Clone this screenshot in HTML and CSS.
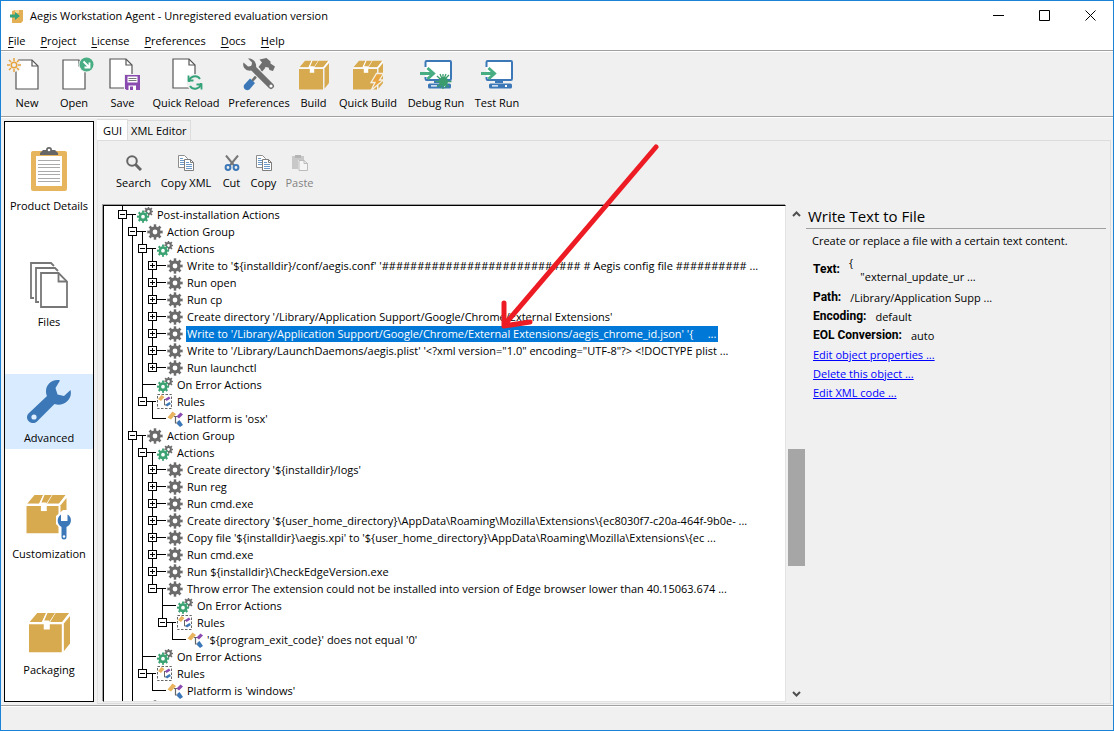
FILE: index.html
```html
<!DOCTYPE html>
<html lang="en">
<head>
<meta charset="utf-8">
<title>Aegis Workstation Agent</title>
<link rel="stylesheet" href="styles.css">
</head>
<body>
<svg class="sprite" width="0" height="0" aria-hidden="true">
  <symbol id="gear" viewBox="0 0 16 16">
    <circle cx="8" cy="8" r="4.1" fill="none" stroke="#6b6b6b" stroke-width="3.4"/>
    <circle cx="8" cy="8" r="6.4" fill="none" stroke="#6b6b6b" stroke-width="2.6" pathLength="32" stroke-dasharray="2 2" stroke-dashoffset="1"/>
  </symbol>
  <symbol id="gears" viewBox="0 0 16 16">
    <circle cx="11.5" cy="4.5" r="2.4" fill="none" stroke="#6b6b6b" stroke-width="2"/>
    <circle cx="11.5" cy="4.5" r="3.9" fill="none" stroke="#6b6b6b" stroke-width="1.9" pathLength="32" stroke-dasharray="2 2" stroke-dashoffset="1"/>
    <circle cx="6" cy="9.7" r="5.4" fill="#fff"/>
    <circle cx="6" cy="9.7" r="3.2" fill="none" stroke="#3ba272" stroke-width="2.7"/>
    <circle cx="6" cy="9.7" r="5" fill="none" stroke="#3ba272" stroke-width="2.2" pathLength="32" stroke-dasharray="2 2" stroke-dashoffset="1"/>
  </symbol>
  <symbol id="rule" viewBox="0 0 16 16">
    <path d="M7 5.500h3.500M8.500 5.500v6.500h3" fill="none" stroke="#666" stroke-width="1.200"/>
    <path d="M0.500 6.500l5-6 3.500 2.500-5 5.500z" fill="#e9b45f"/>
    <path d="M9.500 5.500l4-4 2.500 2-4 4z" fill="#8a4bb0"/>
    <path d="M10.500 10.500l2-1.500 3.500 5-3 2-3-3z" fill="#3c78b8"/>
  </symbol>
  <symbol id="rules" viewBox="0 0 16 16">
    <rect x="0.500" y="0.500" width="14" height="14" fill="none" stroke="#666" stroke-dasharray="2.500 1.500"/>
    <path d="M7 5.500h3M7.500 5.500v5.500h3" fill="none" stroke="#666"/>
    <path d="M1 5l3.500-4 3 2-3.500 4z" fill="#e9b45f"/>
    <path d="M8 5l4-2.500 1.500 2-4 2.500z" fill="#8a4bb0"/>
    <path d="M8.500 10.500l4-2.500 1.500 2-4 2.500z" fill="#3c78b8"/>
  </symbol>
  <symbol id="package" viewBox="0 0 30 30">
    <path d="M0 9h24v20.500H0z" fill="#d8aa50"/>
    <path d="M25.500 8.500L30 3v20l-4.500 5.800z" fill="#d8aa50"/>
    <path d="M6 0.700h6.500L9.500 7.300H0.500z" fill="#d8aa50"/>
    <path d="M15.500 0.700h5L17 7.300h-5z" fill="#fff"/>
    <path d="M12.500 0.700h4L12.500 7.300h-3z" fill="#fff"/>
    <path d="M19.500 0.700h9.800l-5 6.600H15.500z" fill="#d8aa50"/>
    <path d="M13.500 0.700h5.500L14.800 7.300v-1h-3.600z" fill="#d8aa50"/>
    <path d="M10.800 7.300h4.400v5.500h-4.400z" fill="#fff"/>
    <path d="M0 8h10.800M15.200 8h9.300L30 1.300" fill="none" stroke="#fff" stroke-width="1.200"/>
  </symbol>
  <symbol id="wrench" viewBox="0 0 44 44">
    <path d="M33 0.500c-6-2-14 3-14 10.500 0 2.200.3 3.500 1 5L1.500 33.500c-2 2-2 5.200 0 7.500 2.300 2.500 6 2.700 8.500.5L27.500 24c9 3 18.500-4.500 16-14l-6.500 6-6.500-1.500L28.500 8z" fill="currentColor"/>
    <circle cx="7" cy="37" r="2.600" fill="#dceeff"/>
  </symbol>
  <symbol id="page" viewBox="0 0 24 31">
    <path d="M1 1h16l6 6v23H1z" fill="#fff" stroke="#555" stroke-width="1.200"/>
    <path d="M17 1v6h6" fill="none" stroke="#555" stroke-width="1.200"/>
  </symbol>
  <symbol id="copy" viewBox="0 0 16 16">
    <path d="M0.500 0.500h6l3 3v9h-9z" fill="#fff" stroke="#8d8d8d"/>
    <path d="M2 3.500h3M2 5.500h4M2 7.500h4M2 9.500h4" stroke="#6a98c8"/>
    <path d="M6.500 4.500h6l3 3v8h-9z" fill="#fff" stroke="#7d7d7d"/>
    <path d="M12.500 4.500v3h3" fill="none" stroke="#7d7d7d"/>
    <path d="M8 7.500h3M8 9.500h6M8 11.500h6M8 13.500h6" stroke="#6a98c8"/>
  </symbol>
  <symbol id="monitor" viewBox="0 0 34 31">
    <path d="M6.500 8V3.200Q6.500 2 7.700 2H31Q32 2 32 3.200V19.500Q32 21 31 21H7.700Q6.500 21 6.500 19.500V18" fill="#fff" stroke="#3c78b8" stroke-width="2"/>
    <path d="M15 22h8v2h-8z" fill="#3c78b8"/>
    <rect x="9" y="24.500" width="23" height="5" rx="1.500" fill="#3c78b8"/>
    <path d="M12 26.200h6v1.400h-6zM25 26h2v2h-2z" fill="#fff"/>
    <path d="M1 14.500h12M8.500 9l6 5.500-6 5.500" fill="none" stroke="#48ad82" stroke-width="3"/>
  </symbol>
</svg>

<div class="window">
  <header class="titlebar">
    <svg class="app-icon" viewBox="0 0 14 14"><path d="M2 2l3-1h8v11l-2 2H2z" fill="#e4b055"/><path d="M5 1h4v3H5z" fill="#f6d99b"/><path d="M0 5.500h5V3l5 4-5 4V8.500H0z" fill="#35a37a"/></svg>
    <span class="title">Aegis Workstation Agent - Unregistered evaluation version</span>
    <div class="window-controls">
      <button aria-label="Minimize"><svg viewBox="0 0 11 11"><path d="M0 5.500h11"/></svg></button>
      <button aria-label="Maximize"><svg viewBox="0 0 11 11"><path d="M0.500 0.500h10v10h-10z"/></svg></button>
      <button aria-label="Close"><svg viewBox="0 0 11 11"><path d="M0.500 0.500l10 10M10.500 0.500l-10 10"/></svg></button>
    </div>
  </header>

  <nav class="menubar">
    <button><u>F</u>ile</button>
    <button><u>P</u>roject</button>
    <button><u>L</u>icense</button>
    <button><u>P</u>references</button>
    <button><u>D</u>ocs</button>
    <button><u>H</u>elp</button>
  </nav>

  <div class="toolbar">
    <button>
      <svg viewBox="0 0 38 34" width="38" height="34"><use href="#page" x="7" y="2" width="24" height="31"/><circle cx="6" cy="8" r="7" fill="#f0f0f0"/><g stroke="#e6a23c" stroke-width="1.500" fill="none"><circle cx="6" cy="8" r="2.800"/><path d="M6 1v3M6 12v3M-1 8h3M10 8h3M1 3l2 2M11 3l-2 2M1 13l2-2M11 13l-2-2"/></g></svg>
      New</button>
    <button>
      <svg viewBox="0 0 38 34" width="38" height="34"><use href="#page" x="7" y="2" width="24" height="31"/><circle cx="31.500" cy="7.500" r="8" fill="#f0f0f0"/><circle cx="31.500" cy="7.500" r="7" fill="#48ad82"/><path d="M28.500 4.500l5 5M34.500 5.500v5h-5" fill="none" stroke="#fff" stroke-width="1.800"/></svg>
      Open</button>
    <button>
      <svg viewBox="0 0 38 34" width="38" height="34"><use href="#page" x="5" y="1" width="24" height="31"/><path d="M20 17h17v17H20z" fill="#f0f0f0"/><path d="M21 18h15v15H22.500L21 31.500z" fill="#8a4bb0"/><path d="M23.500 19.500h10v6h-10zM24.500 28.500h7.500V33h-7.500z" fill="#fff"/><path d="M24.500 21.500h8M24.500 23.500h8" stroke="#777"/><path d="M26 29.500h3V33h-3z" fill="#8a4bb0"/></svg>
      Save</button>
    <button>
      <svg viewBox="0 0 38 34" width="38" height="34"><use href="#page" x="5" y="1" width="24" height="31"/><circle cx="28" cy="25.500" r="8.500" fill="#f0f0f0"/><g fill="none" stroke="#35a37a" stroke-width="2"><path d="M22 25a6 6 0 0 1 11-3M34 26a6 6 0 0 1-11 3"/><path d="M21.500 18.500v5h5M34.500 32.500v-5h-5" stroke-width="1.800"/></g></svg>
      Quick Reload</button>
    <button>
      <svg viewBox="0 0 34 34" width="34" height="34"><path d="M10 24L22.500 10" stroke="#6f6f6f" stroke-width="2.600"/><path d="M2 28l6-6.500 5 4.500-5.500 6.500q-3 1.500-5-.5-1.500-2-.5-4z" fill="#3c78b8"/><path d="M17.500 2.500L24.500 1l4 3.500v2l4.500 3-2 4.500-3.500-1-1-2.500-3.500-.5-3 3.500-3.500-3.500 3.500-4.500z" fill="#6f6f6f"/><path d="M11 11L29 29" stroke="#f0f0f0" stroke-width="8"/><path d="M11 11L29 29" stroke="#6f6f6f" stroke-width="6" stroke-linecap="round"/><path d="M6 1.500l4 4-.5 3.500-3.500.5L1.500 5.500C0 10 4 14.500 9.500 13.500L14 10.500c1-5-3-9.500-8-9z" fill="#6f6f6f"/><circle cx="29" cy="29" r="1.600" fill="#fff"/></svg>
      Preferences</button>
    <button><svg viewBox="0 0 34 34" width="34" height="34"><use href="#package" x="2" y="3" width="30" height="30"/></svg>
      Build</button>
    <button><svg viewBox="0 0 34 34" width="34" height="34"><use href="#package" x="2" y="3" width="30" height="30"/><path d="M25.500 16.500h7l-4 6.500h4L20 33.500l4-8h-4z" fill="#e9a53f" stroke="#f4f0e6" stroke-width="1.300"/></svg>
      Quick Build</button>
    <button><svg viewBox="0 0 34 34" width="34" height="34"><use href="#monitor" x="0" y="2" width="34" height="31"/><g stroke="#3a9c6c" stroke-width="1.300"><path d="M24 17v15M16.500 24.500h16M18 19l12 11M30 18L18 30M21 17l6 14M27 17l-6 14"/><circle cx="24.500" cy="24.500" r="4.500" fill="#3a9c6c" stroke="none"/></g></svg>
      Debug Run</button>
    <button><svg viewBox="0 0 34 34" width="34" height="34"><use href="#monitor" x="0" y="2" width="34" height="31"/></svg>
      Test Run</button>
  </div>

  <main class="workspace">
    <nav class="sections">
      <button><svg viewBox="0 0 38 46" width="38" height="46"><rect x="1" y="5" width="36" height="40" rx="2" fill="#e8b55f"/><path d="M6 10h26v30H6z" fill="#fff"/><path d="M10 7l3-3h3a3 3 0 0 1 6 0h3l3 3v2H10z" fill="#666"/><circle cx="19" cy="4" r="1.300" fill="#fff"/><path d="M8 14.500h22M8 18.500h22M8 21.500h22M8 25.500h22M8 28.500h22M8 32.500h22M8 35.500h22" stroke="#aaa"/></svg>Product Details</button>
      <button><svg viewBox="0 0 38 46" width="38" height="46"><g fill="none" stroke="#777" stroke-width="1.800"><path d="M4 36H1V1h20l3 3M9 40H6V6h19l3 3"/><path d="M11 11h17.500l8.500 8.500V45H11z" fill="#fff"/><path d="M28.500 11v8.500H37"/></g></svg>Files</button>
      <button class="current" aria-current="page"><svg class="blue" viewBox="0 0 44 44" width="44" height="44"><use href="#wrench" width="44" height="44"/></svg>Advanced</button>
      <button><svg viewBox="0 0 46 46" width="46" height="46"><use href="#package" x="0" y="0" width="41" height="40"/><path d="M37 16l-7 6v8l4 4v12h8V34l4-4v-8l-3-6z" fill="#fff"/><path d="M35 20.500c-4.500 3-4.500 10 .5 12.500V43q0 2.500 2.500 2.500T40.500 43V33c5.500-2.500 6-10 1-12.500v6.500H35z" fill="#3c78b8"/><circle cx="38" cy="42.500" r="1.200" fill="#fff"/></svg>Customization</button>
      <button><svg viewBox="0 0 42 44" width="42" height="44"><use href="#package" x="1" y="0" width="41" height="41"/></svg>Packaging</button>
    </nav>

    <section class="notebook">
      <div class="tabs" role="tablist">
        <button class="tab active" role="tab" aria-selected="true">GUI</button>
        <button class="tab" role="tab" aria-selected="false">XML Editor</button>
      </div>
      <div class="tab-page">
        <div class="edit-bar">
          <button><svg viewBox="0 0 16 16"><circle cx="6" cy="6" r="4.800" fill="none" stroke="#666" stroke-width="2"/><path d="M9.500 9.500l5.500 5.500" stroke="#666" stroke-width="3"/></svg>Search</button>
          <button><svg viewBox="0 0 16 16"><use href="#copy" width="16" height="16"/></svg>Copy XML</button>
          <button><svg viewBox="0 0 16 16"><path d="M2 0.500l8.500 10.500M14 0.500L5.500 11" stroke="#777" stroke-width="2"/><g fill="none" stroke="#3c78b8" stroke-width="2"><circle cx="4" cy="12.500" r="2.400"/><circle cx="12" cy="12.500" r="2.400"/></g></svg>Cut</button>
          <button><svg viewBox="0 0 16 16"><use href="#copy" width="16" height="16"/></svg>Copy</button>
          <button class="muted" disabled><svg viewBox="0 0 16 16"><path d="M0 1h12v4H6v9H0z" fill="#c8c8c8"/><path d="M3 0h6v3H3z" fill="#b4b4b4"/><path d="M7 5.500h5l3.500 3v7H7z" fill="#f5f5f5" stroke="#bbb"/><path d="M12 5.500v3h3.500" fill="none" stroke="#bbb"/></svg>Paste</button>
        </div>

        <div class="split">
          <div class="tree" role="tree">
            <ul>
              <li><div class="row open"><button class="toggle" aria-label="Collapse"></button><svg><use href="#gears"/></svg><span>Post-installation Actions</span></div>
                <ul>
                  <li><div class="row open"><button class="toggle" aria-label="Collapse"></button><svg><use href="#gear"/></svg><span>Action Group</span></div>
                    <ul>
                      <li><div class="row open"><button class="toggle" aria-label="Collapse"></button><svg><use href="#gears"/></svg><span>Actions</span></div>
                        <ul>
                          <li><div class="row"><button class="toggle plus" aria-label="Expand"></button><svg><use href="#gear"/></svg><span>Write to '${installdir}/conf/aegis.conf' '############################ # Aegis config file ########## ...</span></div></li>
                          <li><div class="row"><button class="toggle plus" aria-label="Expand"></button><svg><use href="#gear"/></svg><span>Run open</span></div></li>
                          <li><div class="row"><button class="toggle plus" aria-label="Expand"></button><svg><use href="#gear"/></svg><span>Run cp</span></div></li>
                          <li><div class="row"><button class="toggle plus" aria-label="Expand"></button><svg><use href="#gear"/></svg><span>Create directory '/Library/Application Support/Google/Chrome/External Extensions'</span></div></li>
                          <li><div class="row selected"><button class="toggle plus" aria-label="Expand"></button><svg><use href="#gear"/></svg><span>Write to '/Library/Application Support/Google/Chrome/External Extensions/aegis_chrome_id.json' '{&nbsp;&nbsp;&nbsp;&nbsp; ...</span></div></li>
                          <li><div class="row"><button class="toggle plus" aria-label="Expand"></button><svg><use href="#gear"/></svg><span>Write to '/Library/LaunchDaemons/aegis.plist' '&lt;?xml version="1.0" encoding="UTF-8"?&gt; &lt;!DOCTYPE plist ...</span></div></li>
                          <li><div class="row"><button class="toggle plus" aria-label="Expand"></button><svg><use href="#gear"/></svg><span>Run launchctl</span></div></li>
                        </ul>
                      </li>
                      <li><div class="row leaf"><svg><use href="#gears"/></svg><span>On Error Actions</span></div></li>
                      <li><div class="row open"><button class="toggle" aria-label="Collapse"></button><svg><use href="#rules"/></svg><span>Rules</span></div>
                        <ul>
                          <li><div class="row leaf"><svg><use href="#rule"/></svg><span>Platform is 'osx'</span></div></li>
                        </ul>
                      </li>
                    </ul>
                  </li>
                  <li><div class="row open"><button class="toggle" aria-label="Collapse"></button><svg><use href="#gear"/></svg><span>Action Group</span></div>
                    <ul>
                      <li><div class="row open"><button class="toggle" aria-label="Collapse"></button><svg><use href="#gears"/></svg><span>Actions</span></div>
                        <ul>
                          <li><div class="row"><button class="toggle plus" aria-label="Expand"></button><svg><use href="#gear"/></svg><span>Create directory '${installdir}/logs'</span></div></li>
                          <li><div class="row"><button class="toggle plus" aria-label="Expand"></button><svg><use href="#gear"/></svg><span>Run reg</span></div></li>
                          <li><div class="row"><button class="toggle plus" aria-label="Expand"></button><svg><use href="#gear"/></svg><span>Run cmd.exe</span></div></li>
                          <li><div class="row"><button class="toggle plus" aria-label="Expand"></button><svg><use href="#gear"/></svg><span>Create directory '${user_home_directory}\AppData\Roaming\Mozilla\Extensions\{ec8030f7-c20a-464f-9b0e- ...</span></div></li>
                          <li><div class="row"><button class="toggle plus" aria-label="Expand"></button><svg><use href="#gear"/></svg><span>Copy file '${installdir}\aegis.xpi' to '${user_home_directory}\AppData\Roaming\Mozilla\Extensions\{ec ...</span></div></li>
                          <li><div class="row"><button class="toggle plus" aria-label="Expand"></button><svg><use href="#gear"/></svg><span>Run cmd.exe</span></div></li>
                          <li><div class="row"><button class="toggle plus" aria-label="Expand"></button><svg><use href="#gear"/></svg><span>Run ${installdir}\CheckEdgeVersion.exe</span></div></li>
                          <li><div class="row open"><button class="toggle" aria-label="Collapse"></button><svg><use href="#gear"/></svg><span>Throw error The extension could not be installed into version of Edge browser lower than 40.15063.674 ...</span></div>
                            <ul>
                              <li><div class="row leaf"><svg><use href="#gears"/></svg><span>On Error Actions</span></div></li>
                              <li><div class="row open"><button class="toggle" aria-label="Collapse"></button><svg><use href="#rules"/></svg><span>Rules</span></div>
                                <ul>
                                  <li><div class="row leaf"><svg><use href="#rule"/></svg><span>'${program_exit_code}' does not equal '0'</span></div></li>
                                </ul>
                              </li>
                            </ul>
                          </li>
                        </ul>
                      </li>
                      <li><div class="row leaf"><svg><use href="#gears"/></svg><span>On Error Actions</span></div></li>
                      <li><div class="row open"><button class="toggle" aria-label="Collapse"></button><svg><use href="#rules"/></svg><span>Rules</span></div>
                        <ul>
                          <li><div class="row leaf"><svg><use href="#rule"/></svg><span>Platform is 'windows'</span></div></li>
                        </ul>
                      </li>
                    </ul>
                  </li>
                  <li><div class="row leaf"><svg><use href="#gear"/></svg></div></li>
                </ul>
              </li>
              <li></li>
            </ul>
          </div>

          <div class="scrollbar">
            <button aria-label="Scroll up"><svg viewBox="0 0 9 6"><path d="M1 5l3.500-3.500L8 5"/></svg></button>
            <div class="track"><div class="thumb"></div></div>
            <button aria-label="Scroll down"><svg viewBox="0 0 9 6"><path d="M1 1l3.500 3.500L8 1"/></svg></button>
          </div>

          <aside class="details">
            <h2>Write Text to File</h2>
            <p>Create or replace a file with a certain text content.</p>
            <dl>
              <div class="tall"><dt>Text:</dt><dd>{<br>&nbsp;&nbsp;&nbsp; "external_update_ur ...</dd></div>
              <div><dt>Path:</dt><dd>/Library/Application Supp ...</dd></div>
              <div><dt>Encoding:</dt><dd>default</dd></div>
              <div><dt>EOL Conversion:</dt><dd>auto</dd></div>
            </dl>
            <div class="links">
              <a href="#">Edit object properties ...</a>
              <a href="#">Delete this object ...</a>
              <a href="#">Edit XML code ...</a>
            </div>
          </aside>
        </div>
      </div>
    </section>
  </main>

  <footer class="statusbar"></footer>
  <svg class="annotation" viewBox="0 0 160 190" aria-hidden="true"><path d="M156 6L6 182M4 162v23M4 185l26-4"/></svg>
</div>
</body>
</html>
```
FILE: styles.css
```css
* { box-sizing: border-box; }

html, body { height: 100%; }

body {
  margin: 0;
  font: 11px/15px "Open Sans", "Noto Sans", sans-serif;
  color: #000;
}

button {
  margin: 0;
  padding: 0;
  border: 0;
  background: none;
  font: inherit;
  color: inherit;
}

.sprite { position: absolute; }

.window {
  position: relative;
  display: flex;
  flex-direction: column;
  height: 100vh;
  border: 1px solid #1a82d7;
  background: #f0f0f0;
  overflow: hidden;
}

/* Title bar */
.titlebar {
  display: flex;
  align-items: center;
  gap: 6px;
  height: 29px;
  padding-left: 9px;
  background: #fff;
}
.app-icon { width: 14px; height: 14px; }
.title { flex: 1; }
.window-controls { display: flex; align-self: stretch; }
.window-controls button {
  display: flex;
  align-items: center;
  justify-content: center;
  width: 46px;
}
.window-controls svg {
  width: 11px;
  height: 11px;
  fill: none;
  stroke: #000;
}

/* Menu bar */
.menubar {
  display: flex;
  align-items: center;
  gap: 15px;
  height: 20px;
  padding-left: 7px;
  background: #fff;
}
.menubar u { text-underline-offset: 2px; }

/* Main toolbar */
.toolbar {
  display: grid;
  grid-template-columns: 48px 46px 51px 76px 70px 39px 70px 66px 56px;
  height: 67px;
  padding: 6px 0 0 2px;
  border-top: 1px solid #a0a0a0;
  border-bottom: 1px solid #a0a0a0;
  box-shadow: inset 0 1px #fff;
}
.toolbar button {
  display: flex;
  flex-direction: column;
  align-items: center;
  gap: 4px;
  white-space: nowrap;
}
.toolbar svg { flex: none; overflow: visible; }

/* Body */
.workspace {
  flex: 1;
  display: flex;
  gap: 3px;
  min-height: 0;
  padding: 1px 2px 1px 3px;
  border-top: 1px solid #fff;
}

.sections {
  display: flex;
  flex-direction: column;
  justify-content: space-around;
  width: 90px;
  margin: 2px 0;
  border: 1px solid #000;
  background: #fff;
}
.sections button {
  display: flex;
  flex-direction: column;
  align-items: center;
  justify-content: flex-end;
  gap: 6px;
  height: 75px;
  padding-bottom: 4px;
}
.sections .current { background: #d9ecff; }
.blue { color: #3c78b8; }

.notebook {
  flex: 1;
  display: flex;
  flex-direction: column;
  min-width: 0;
}
.tabs {
  display: flex;
  align-items: flex-end;
  height: 21px;
}
.tab {
  height: 20px;
  padding: 0 3px;
  border: 1px solid #dcdcdc;
  border-width: 1px 1px 0 0;
}
.tab.active {
  height: 22px;
  margin-bottom: -1px;
  padding: 0 5px 0 6px;
  background: #fff;
}
.tab-page {
  flex: 1;
  display: flex;
  flex-direction: column;
  min-height: 0;
  padding: 0 4px 1px 5px;
  border: 1px solid #dcdcdc;
  border-left-color: #e3e3e3;
}

.edit-bar {
  display: grid;
  grid-template-columns: 45px 60px 31px 33px 39px;
  height: 64px;
  padding: 14px 0 0 8px;
}
.edit-bar button {
  display: flex;
  flex-direction: column;
  align-items: center;
  gap: 4px;
  white-space: nowrap;
}
.edit-bar svg { width: 16px; height: 16px; }
.muted { color: #838383; }

.split {
  flex: 1;
  display: flex;
  min-height: 0;
}

/* Tree */
.tree {
  flex: 1;
  min-width: 0;
  padding-left: 14px;
  overflow: hidden;
  border: 1px solid #000;
  border-right-color: #e3e3e3;
  border-bottom-color: #e3e3e3;
  background: #fff;
  box-shadow: -1px -1px #a0a0a0;
}
.tree ul {
  margin: 0;
  padding: 0;
  list-style: none;
}
.tree ul ul { margin-left: 10px; }
.tree li {
  background: linear-gradient(#000, #000) 4px 0 / 1px 100% no-repeat;
}
.tree li:last-child { background-size: 1px 8px; }
.row {
  display: flex;
  align-items: center;
  height: 17px;
  white-space: nowrap;
  background: linear-gradient(#000, #000) 4px 8px / 14px 1px no-repeat;
}
.row.open {
  background:
    linear-gradient(#000, #000) 4px 8px / 14px 1px no-repeat,
    linear-gradient(#000, #000) 14px 8px / 1px 9px no-repeat;
}
.row svg {
  flex: none;
  width: 16px;
  height: 16px;
  margin-left: 10px;
}
.row.leaf svg { margin-left: 19px; }
.row span {
  height: 16px;
  margin-left: 3px;
  padding: 0 2px 0 1px;
}
.row.selected span { background: #0078d7; color: #fff; }
.toggle {
  flex: none;
  width: 9px;
  height: 9px;
  border: 1px solid #000;
  background: linear-gradient(#000, #000) center / 5px 1px no-repeat #fff;
}
.toggle.plus {
  background:
    linear-gradient(#000, #000) center / 5px 1px no-repeat,
    linear-gradient(#000, #000) center / 1px 5px no-repeat #fff;
}

/* Scroll bar */
.scrollbar {
  display: flex;
  flex-direction: column;
  width: 19px;
  padding-left: 2px;
}
.scrollbar button { height: 17px; line-height: 0; }
.scrollbar svg {
  width: 9px;
  height: 6px;
  fill: none;
  stroke: #505050;
  stroke-width: 2;
}
.track { flex: 1; display: flex; flex-direction: column; }
.track::before { content: ""; flex: 227 0 0; }
.track::after { content: ""; flex: 119 0 0; }
.thumb { flex: 116 0 0; background: #a6a6a6; }

/* Object details */
.details {
  width: 301px;
  padding-left: 1px;
}
.details h2 {
  margin: 0;
  padding: 0 0 1px 2px;
  border-bottom: 1px solid #a0a0a0;
  font-size: 15px;
  line-height: 22px;
  font-weight: 400;
}
.details p { margin: 4px 0 3px 6px; }
.details dl { margin: 0 0 0 7px; }
.details dl div {
  display: flex;
  align-items: center;
  gap: 9px;
  height: 19px;
}
.details dl .tall { height: 37px; }
.details dt { font: bold 12px/15px Roboto, Arial, sans-serif; }
.details dd { margin: 0; line-height: 14px; }
.links {
  display: flex;
  flex-direction: column;
  align-items: flex-start;
  margin-left: 7px;
}
.links a { color: #00f; line-height: 19px; }

.statusbar {
  height: 25px;
  border-top: 1px solid #a0a0a0;
  box-shadow: inset 0 1px #fff;
}

/* Hand-drawn pointer over the tree */
.annotation {
  position: absolute;
  left: 499px;
  top: 140px;
  width: 160px;
  height: 190px;
  fill: none;
  stroke: #ed1c24;
  stroke-width: 5;
  stroke-linecap: round;
  pointer-events: none;
}
```
